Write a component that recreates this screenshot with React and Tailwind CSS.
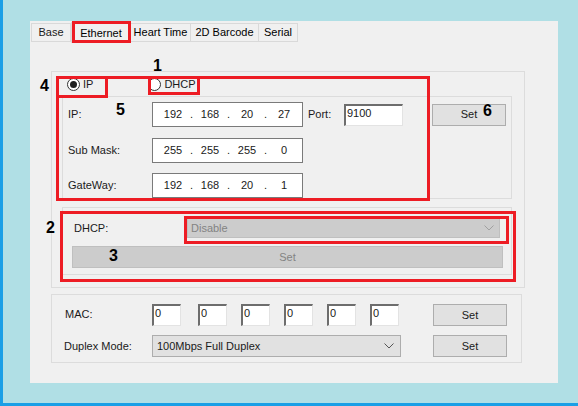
import React from 'react';

const font = { fontFamily: '"Liberation Sans", Arial, sans-serif' };

const Tab = ({ label, active, w }) => (
    <div
        className={
            active
                ? 'h-[21px] -mb-px flex items-center justify-center bg-[#f0f0f0] border border-b-0 border-[#d9d9d9] text-black'
                : 'h-[19px] flex items-center justify-center bg-[#f0f0f0] border border-l-0 border-[#d9d9d9] text-black'
        }
        style={{ width: w }}
    >
        {label}
    </div>
);

const Radio = ({ checked, label }) => (
    <div className="flex items-center gap-[3px]">
        <div className="w-[13px] h-[13px] rounded-full border border-[#333] bg-white flex items-center justify-center">
            {checked && <div className="w-[7px] h-[7px] rounded-full bg-[#1f1f1f]" />}
        </div>
        <span>{label}</span>
    </div>
);

const IpBox = ({ parts }) => (
    <div className="w-[151px] h-[25px] border border-[#7a7a7a] bg-white flex items-center pl-[3px]">
        {parts.map((p, i) => (
            <React.Fragment key={i}>
                <span className="w-[34px] text-center">{p}</span>
                {i < 3 && <span className="w-[3px] flex justify-center">.</span>}
            </React.Fragment>
        ))}
    </div>
);

const Sunken = ({ value, w, h }) => (
    <div
        className="bg-white border-t-2 border-l-2 border-r border-b border-t-[#6d6d6d] border-l-[#6d6d6d] border-r-[#e3e3e3] border-b-[#e3e3e3] pl-[1px] leading-[14px]"
        style={{ width: w, height: h }}
    >
        {value}
    </div>
);

const Btn = ({ children, w = 74, h = 23 }) => (
    <div
        className="bg-[#e1e1e1] border border-[#adadad] flex items-center justify-center"
        style={{ width: w, height: h }}
    >
        {children}
    </div>
);

const Chevron = ({ color }) => (
    <svg width="10" height="6" viewBox="0 0 10 6" fill="none">
        <path d="M0.5 0.5 L5 5 L9.5 0.5" stroke={color} strokeWidth="1" />
    </svg>
);

// positions below are measured from the inner edge (root has a 3px left border)
const Mark = ({ n, x, y }) => (
    <div
        className="absolute text-[16px] font-bold text-black leading-none"
        style={{ left: x, top: y, fontFamily: '"Liberation Sans", Arial, sans-serif' }}
    >
        {n}
    </div>
);

const RedBox = ({ x, y, w, h }) => (
    <div className="absolute border-[3px] border-[#ed1c24]" style={{ left: x, top: y, width: w, height: h }} />
);

export default function App() {
    return (
        <div
            className="relative w-[578px] h-[406px] bg-[#b0dfe5] border-l-[3px] border-b-[3px] border-[#1a9fe6] overflow-hidden text-[11px] text-[#1a1a1a]"
            style={font}
        >
            <div className="ml-[27px] mt-[21px] w-[528px] h-[362px] bg-[#f0f0f0]">
                {/* tabs */}
                <div className="h-[21px] flex items-end pl-[1px]">
                    <div className="h-[19px] w-[40px] flex items-center justify-center border border-[#d9d9d9]">Base</div>
                    <Tab label="Ethernet" active w={60} />
                    <Tab label="Heart Time" w={60} />
                    <Tab label="2D Barcode" w={68} />
                    <Tab label="Serial" w={39} />
                </div>

                {/* ip group */}
                <div className="ml-[21px] mt-[29px] w-[474px] h-[217px] border border-[#dcdcdc]">
                    <div className="h-[24px] flex items-center pl-[15px] pt-[1px]">
                        <Radio checked label="IP" />
                        <div className="ml-[55px]">
                            <Radio label="DHCP" />
                        </div>
                    </div>

                    <div className="ml-[10px] w-[450px] h-[103px] border border-[#dcdcdc] pl-[5px] pt-[5px]">
                        <div className="flex items-center">
                            <span className="w-[84px]">IP:</span>
                            <IpBox parts={['192', '168', '20', '27']} />
                            <span className="ml-[5px] w-[36px]">Port:</span>
                            <Sunken value="9100" w={59} h={22} />
                            <div className="ml-[29px]">
                                <Btn h={22}>Set</Btn>
                            </div>
                        </div>
                        <div className="flex items-center mt-[11px]">
                            <span className="w-[84px]">Sub Mask:</span>
                            <IpBox parts={['255', '255', '255', '0']} />
                        </div>
                        <div className="flex items-center mt-[10px]">
                            <span className="w-[84px]">GateWay:</span>
                            <IpBox parts={['192', '168', '20', '1']} />
                        </div>
                    </div>

                    <div className="ml-[10px] mt-[8px] w-[450px] h-[68px] border border-[#dcdcdc] pl-[9px] pt-[10px]">
                        <div className="flex items-center">
                            <span className="w-[115px] pl-[2px]">DHCP:</span>
                            <div className="w-[313px] h-[20px] bg-[#cccccc] border border-[#bfbfbf] flex items-center justify-between pl-[3px] pr-[5px] text-[#838383]">
                                <span>Disable</span>
                                <Chevron color="#a0a0a0" />
                            </div>
                        </div>
                        <div className="mt-[8px] w-[431px] h-[22px] bg-[#cccccc] border border-[#bfbfbf] flex items-center justify-center text-[#838383]">
                            Set
                        </div>
                    </div>
                </div>

                {/* mac group */}
                <div className="ml-[21px] mt-[6px] w-[471px] h-[69px] border border-[#dcdcdc] pt-[8px]">
                    <div className="flex items-center">
                        <span className="w-[100px] pl-[13px]">MAC:</span>
                        <div className="flex gap-[17px]">
                            <Sunken value="0" w={29} h={22} />
                            <div className="flex gap-[14px]">
                                <Sunken value="0" w={29} h={22} />
                                <Sunken value="0" w={29} h={22} />
                                <Sunken value="0" w={29} h={22} />
                                <Sunken value="0" w={29} h={22} />
                                <Sunken value="0" w={29} h={22} />
                            </div>
                        </div>
                        <div className="ml-[34px] mt-[1px]">
                            <Btn h={22}>Set</Btn>
                        </div>
                    </div>
                    <div className="flex items-center mt-[9px]">
                        <span className="w-[100px] pl-[12px]">Duplex Mode:</span>
                        <div className="w-[249px] h-[22px] bg-[#e1e1e1] border border-[#adadad] flex items-center justify-between pl-[4px] pr-[6px]">
                            <span>100Mbps Full Duplex</span>
                            <Chevron color="#555" />
                        </div>
                        <div className="ml-[32px]">
                            <Btn h={22}>Set</Btn>
                        </div>
                    </div>
                </div>
            </div>

            {/* annotations */}
            <RedBox x={69} y={21} w={59} h={22} />
            <RedBox x={53} y={76} w={374} h={125} />
            <RedBox x={53} y={76} w={52} h={22} />
            <RedBox x={145} y={76} w={52} h={19} />
            <RedBox x={57} y={211} w={456} h={71} />
            <RedBox x={181} y={216} w={325} h={28} />
            <Mark n="1" x={150} y={58} />
            <Mark n="4" x={37} y={78} />
            <Mark n="5" x={113} y={102} />
            <Mark n="6" x={480} y={103} />
            <Mark n="2" x={43} y={220} />
            <Mark n="3" x={106} y={248} />
        </div>
    );
}
